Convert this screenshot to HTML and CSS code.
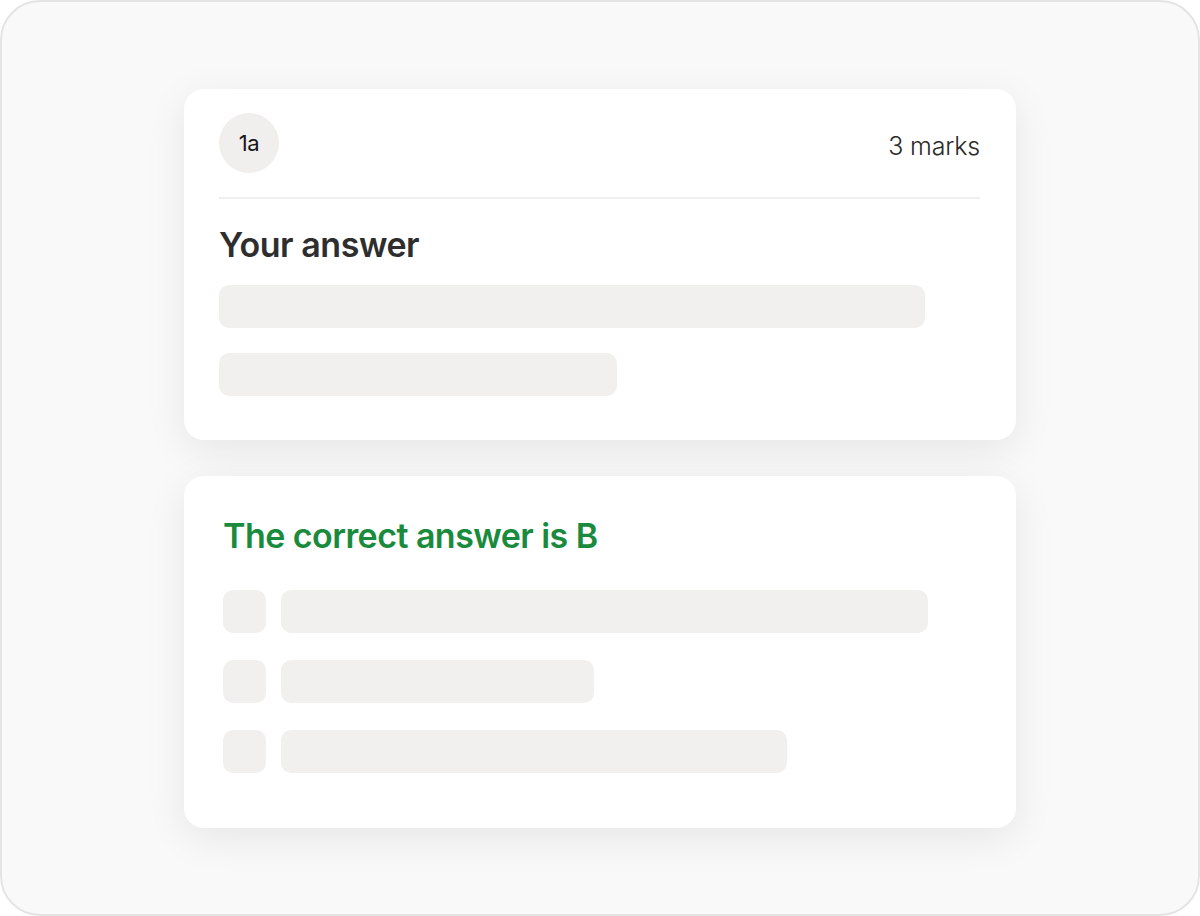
FILE: index.html
```html
<!DOCTYPE html>
<html>
<head>
	<meta charset="utf-8">
	<meta name="viewport" content="width=device-width, initial-scale=1">
	<title>Answer review</title>
	<link rel="stylesheet" href="styles.css">
</head>
<body>
	<div class="frame">
		<div class="card card-answer">
			<div class="card-head">
				<span class="badge">1a</span>
				<span class="marks">3 marks</span>
			</div>
			<h2 class="title">Your answer</h2>
			<div class="bar bar-long"></div>
			<div class="bar bar-short"></div>
		</div>

		<div class="card card-correct">
			<h2 class="title correct">The correct answer is B</h2>
			<div class="option">
				<span class="box"></span>
				<span class="bar line-a"></span>
			</div>
			<div class="option">
				<span class="box"></span>
				<span class="bar line-b"></span>
			</div>
			<div class="option">
				<span class="box"></span>
				<span class="bar line-c"></span>
			</div>
		</div>
	</div>
</body>
</html>
```

FILE: styles.css
```css
body
{
	margin: 0;
	font-family: Inter, "Noto Sans", sans-serif;
	background: #ffffff;
}
.frame
{
	width: 1200px;
	height: 916px;
	box-sizing: border-box;
	border: 2px solid #e4e4e4;
	border-radius: 40px;
	background: #f9f9f9;
	padding-top: 87px;
}
.card
{
	width: 832px;
	box-sizing: border-box;
	margin: 0 auto;
	background: #ffffff;
	border-radius: 20px;
	box-shadow: 0 10px 40px rgba(0, 0, 0, 0.08);
}
.card-answer
{
	padding: 24px 36px 44px 35px;
}
.card-head
{
	display: flex;
	justify-content: space-between;
	align-items: center;
	padding-bottom: 24px;
	border-bottom: 2px solid #efefef;
}
.badge
{
	width: 60px;
	height: 60px;
	border-radius: 50%;
	background: #f0efee;
	display: flex;
	align-items: center;
	justify-content: center;
	font-size: 22px;
	font-weight: 400;
	color: #161616;
	letter-spacing: -0.5px;
}
.marks
{
	font-size: 25px;
	font-weight: 300;
	color: #2a2a2a;
	letter-spacing: -0.2px;
	padding-top: 6px;
}
.title
{
	margin: 26px 0 20px 0;
	font-size: 34px;
	line-height: 40px;
	font-weight: 600;
	color: #2e2e2e;
	letter-spacing: -0.45px;
}
.bar
{
	display: block;
	height: 43px;
	border-radius: 10px;
	background: #f1f0ef;
}
.bar-long
{
	width: 706px;
}
.bar-short
{
	width: 398px;
	margin-top: 25px;
}
.card-correct
{
	margin-top: 36px;
	padding: 40px 39px 55px 39px;
}
.correct
{
	margin: 0 0 34px 0;
	color: #1a8b3c;
	letter-spacing: -0.55px;
}
.option
{
	display: flex;
	gap: 15px;
	margin-bottom: 27px;
}
.option:last-child
{
	margin-bottom: 0;
}
.box
{
	width: 43px;
	height: 43px;
	border-radius: 10px;
	background: #f1f0ef;
}
.line-a
{
	width: 647px;
}
.line-b
{
	width: 313px;
}
.line-c
{
	width: 506px;
}
```
